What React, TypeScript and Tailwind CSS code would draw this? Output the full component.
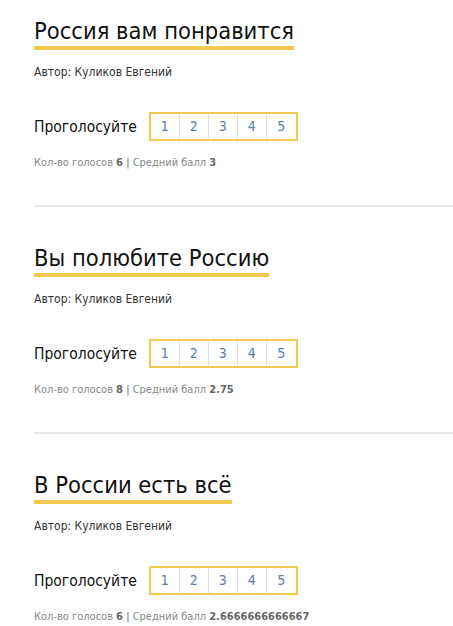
import React from "react";

const items = [
  { title: "Россия вам понравится", votes: "6", avg: "3" },
  { title: "Вы полюбите Россию", votes: "8", avg: "2.75" },
  { title: "В России есть всё", votes: "6", avg: "2.6666666666667" },
];

function Item({ title, votes, avg, last }: { title: string; votes: string; avg: string; last: boolean }) {
  return (
    <div className="flex flex-col">
      <div className="flex">
        <h2 className="pt-[17px] pb-[1px] border-b-4 border-[#f2c94c] text-[23.5px] leading-[28px] text-[#111] font-normal">
          {title}
        </h2>
      </div>
      <div className="mt-[15px] text-[12px] leading-[14px] text-[#333]">Автор: Куликов Евгений</div>
      <div className="mt-[33px] flex items-start">
        <span className="mt-[6px] text-[15.5px] leading-[18px] text-[#111]">Проголосуйте</span>
        <div className="ml-[12px] flex border-2 border-[#f0c94f] h-[29px]">
          {["1", "2", "3", "4", "5"].map((n, i) => (
            <div
              key={n}
              className={`w-[29px] flex items-center justify-center text-[14px] text-[#5a7db0] ${i < 4 ? "border-r border-[#dde3ea]" : ""}`}
            >
              {n}
            </div>
          ))}
        </div>
      </div>
      <div className="mt-[15px] text-[11px] leading-[13px] text-[#888]">
        Кол-во голосов <b className="text-[#666]">{votes}</b> <span className="text-[#666]">|</span> Средний балл{" "}
        <b className="text-[#666]">{avg}</b>
      </div>
      {!last && <div className="mt-[36px] mb-[20px] h-[2px] bg-[#e6e6e6]" />}
    </div>
  );
}

export default function App() {
  return (
    <div className="w-[453px] h-[626px] bg-white pl-[34px] overflow-hidden" style={{ fontFamily: '"DejaVu Sans Condensed", "DejaVu Sans", sans-serif' }}>
      {items.map((it, i) => (
        <Item key={i} {...it} last={i === items.length - 1} />
      ))}
    </div>
  );
}
